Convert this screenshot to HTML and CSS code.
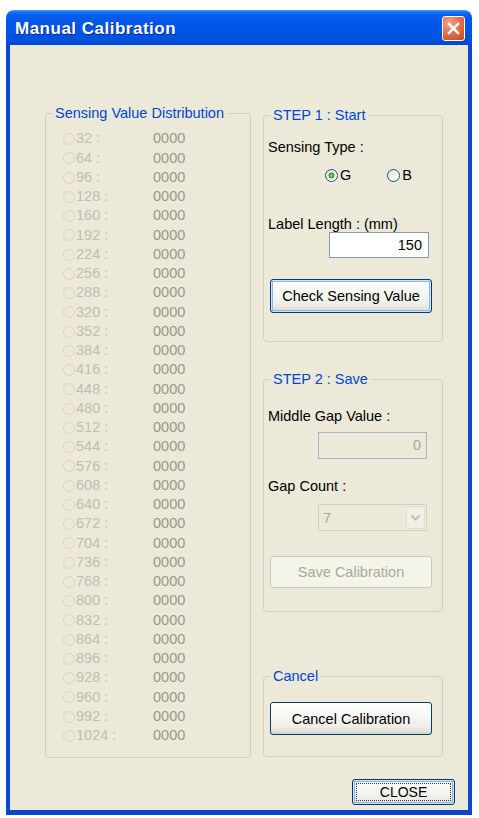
FILE: index.html
```html
<!DOCTYPE html>
<html>
<head>
<meta charset="utf-8">
<title>Manual Calibration</title>
<link rel="stylesheet" href="styles.css">
</head>
<body>
<div class="window">
  <div class="titlebar">
    <span class="title">Manual Calibration</span>
    <span class="close-x">
      <svg width="23" height="25" viewBox="0 0 23 25"><path d="M6.5 7.5 L16.5 17.5 M16.5 7.5 L6.5 17.5" stroke="#fff" stroke-width="2.6" stroke-linecap="square" fill="none"/></svg>
    </span>
  </div>
  <div class="client">
    <div class="columns">
      <fieldset class="group dist">
        <legend>Sensing Value Distribution</legend>
        <div class="row"><span class="rd"></span><span class="lbl">32 :</span><span class="val">0000</span></div>
        <div class="row"><span class="rd"></span><span class="lbl">64 :</span><span class="val">0000</span></div>
        <div class="row"><span class="rd"></span><span class="lbl">96 :</span><span class="val">0000</span></div>
        <div class="row"><span class="rd"></span><span class="lbl">128 :</span><span class="val">0000</span></div>
        <div class="row"><span class="rd"></span><span class="lbl">160 :</span><span class="val">0000</span></div>
        <div class="row"><span class="rd"></span><span class="lbl">192 :</span><span class="val">0000</span></div>
        <div class="row"><span class="rd"></span><span class="lbl">224 :</span><span class="val">0000</span></div>
        <div class="row"><span class="rd"></span><span class="lbl">256 :</span><span class="val">0000</span></div>
        <div class="row"><span class="rd"></span><span class="lbl">288 :</span><span class="val">0000</span></div>
        <div class="row"><span class="rd"></span><span class="lbl">320 :</span><span class="val">0000</span></div>
        <div class="row"><span class="rd"></span><span class="lbl">352 :</span><span class="val">0000</span></div>
        <div class="row"><span class="rd"></span><span class="lbl">384 :</span><span class="val">0000</span></div>
        <div class="row"><span class="rd"></span><span class="lbl">416 :</span><span class="val">0000</span></div>
        <div class="row"><span class="rd"></span><span class="lbl">448 :</span><span class="val">0000</span></div>
        <div class="row"><span class="rd"></span><span class="lbl">480 :</span><span class="val">0000</span></div>
        <div class="row"><span class="rd"></span><span class="lbl">512 :</span><span class="val">0000</span></div>
        <div class="row"><span class="rd"></span><span class="lbl">544 :</span><span class="val">0000</span></div>
        <div class="row"><span class="rd"></span><span class="lbl">576 :</span><span class="val">0000</span></div>
        <div class="row"><span class="rd"></span><span class="lbl">608 :</span><span class="val">0000</span></div>
        <div class="row"><span class="rd"></span><span class="lbl">640 :</span><span class="val">0000</span></div>
        <div class="row"><span class="rd"></span><span class="lbl">672 :</span><span class="val">0000</span></div>
        <div class="row"><span class="rd"></span><span class="lbl">704 :</span><span class="val">0000</span></div>
        <div class="row"><span class="rd"></span><span class="lbl">736 :</span><span class="val">0000</span></div>
        <div class="row"><span class="rd"></span><span class="lbl">768 :</span><span class="val">0000</span></div>
        <div class="row"><span class="rd"></span><span class="lbl">800 :</span><span class="val">0000</span></div>
        <div class="row"><span class="rd"></span><span class="lbl">832 :</span><span class="val">0000</span></div>
        <div class="row"><span class="rd"></span><span class="lbl">864 :</span><span class="val">0000</span></div>
        <div class="row"><span class="rd"></span><span class="lbl">896 :</span><span class="val">0000</span></div>
        <div class="row"><span class="rd"></span><span class="lbl">928 :</span><span class="val">0000</span></div>
        <div class="row"><span class="rd"></span><span class="lbl">960 :</span><span class="val">0000</span></div>
        <div class="row"><span class="rd"></span><span class="lbl">992 :</span><span class="val">0000</span></div>
        <div class="row"><span class="rd"></span><span class="lbl">1024 :</span><span class="val">0000</span></div>
      </fieldset>

      <div class="right">
        <fieldset class="group step1">
          <legend>STEP 1 : Start</legend>
          <div class="text">Sensing Type :</div>
          <div class="radio-row">
            <span class="opt"><span class="rb checked"></span><span>G</span></span>
            <span class="opt opt-b"><span class="rb"></span><span>B</span></span>
          </div>
          <div class="text label-len">Label Length : (mm)</div>
          <div class="edit">150</div>
          <div class="btn focused check">Check Sensing Value</div>
        </fieldset>

        <fieldset class="group step2">
          <legend>STEP 2 : Save</legend>
          <div class="text">Middle Gap Value :</div>
          <div class="edit disabled gapval">0</div>
          <div class="text gapcount">Gap Count :</div>
          <div class="combo">
            <span class="combo-text">7</span>
            <span class="combo-btn">
              <svg width="17" height="21" viewBox="0 0 17 21"><path d="M4.5 8.5 L8.5 12.5 L12.5 8.5" stroke="#C2C0B3" stroke-width="2" fill="none"/></svg>
            </span>
          </div>
          <div class="btn disabled save">Save Calibration</div>
        </fieldset>

        <fieldset class="group cancel">
          <legend>Cancel</legend>
          <div class="btn cancel-btn">Cancel Calibration</div>
        </fieldset>
      </div>
    </div>
    <div class="footer">
      <div class="btn focused close-btn"><span class="focus-rect">CLOSE</span></div>
    </div>
  </div>
</div>
</body>
</html>
```

FILE: styles.css
```css
html, body {
  margin: 0;
  padding: 0;
  background: #ffffff;
}

body {
  font-family: "Liberation Sans", Arial, sans-serif;
  font-size: 14.5px;
}

.window {
  width: 466px;
  margin: 10px 0 0 6px;
}

.titlebar {
  height: 35px;
  box-sizing: border-box;
  border-radius: 8px 8px 0 0;
  background: linear-gradient(to bottom, #4a9bff 0px, #1a6ff5 2px, #0a5deb 5px, #0057e8 12px, #0054e3 24px, #0050dc 31px, #0047d2 35px);
  display: flex;
  align-items: center;
  justify-content: space-between;
  padding: 0 7px 0 9px;
}

.title {
  color: #ffffff;
  font-weight: bold;
  font-size: 17px;
  letter-spacing: 0.5px;
  text-shadow: 1px 1px 0 #0c2a8e;
  padding-top: 2px;
}

.close-x {
  width: 23px;
  height: 25px;
  box-sizing: border-box;
  border: 1px solid #ffffff;
  border-radius: 3px;
  background: radial-gradient(circle at 30% 25%, #f2a184 0, #e2744f 45%, #cf4d26 90%);
  display: flex;
  align-items: center;
  justify-content: center;
  margin-top: 1px;
}

.close-x svg {
  display: block;
}

.client {
  background: #ece9d8;
  border-left: 4px solid #0b47d6;
  border-right: 4px solid #0b47d6;
  border-bottom: 5px solid #0b44d2;
  padding: 0 0 5px 0;
}

.columns {
  display: flex;
  align-items: flex-start;
  padding-left: 35px;
  gap: 12px;
}

.group {
  margin: 0;
  border: 1px solid #d0d0bf;
  border-radius: 4px;
  padding: 0;
  box-sizing: border-box;
  min-width: 0;
}

.group legend {
  color: #0046d5;
  line-height: 16px;
  padding: 0 3px 0 2px;
  margin-left: 7px;
}

.dist {
  width: 206px;
  margin-top: 60px;
  padding: 8.4px 0 11.6px 0;
}

.dist legend {
  margin-left: 7px;
}

.row {
  display: grid;
  grid-template-columns: 12px 78px auto;
  align-items: center;
  height: 19.25px;
  line-height: 19.25px;
  margin-left: 17px;
}

.rd {
  width: 12px;
  height: 12px;
  box-sizing: border-box;
  border: 1px solid #d8d5c8;
  border-radius: 50%;
}

.lbl {
  color: #c0bdb0;
  padding-left: 1px;
  white-space: nowrap;
}

.val {
  color: #9a978a;
}

.right {
  width: 180px;
  margin-top: 62px;
  display: flex;
  flex-direction: column;
}

.text {
  line-height: 16px;
  margin-left: 4px;
  color: #000000;
}

.step1 {
  padding: 16px 0 28px;
}

.radio-row {
  display: flex;
  align-items: center;
  height: 16px;
  margin: 12px 0 0 61px;
}

.opt {
  display: flex;
  align-items: center;
  gap: 2px;
}

.opt-b {
  margin-left: 36px;
}

.rb {
  width: 13px;
  height: 13px;
  box-sizing: border-box;
  border: 1px solid #1c5180;
  border-radius: 50%;
  background: linear-gradient(135deg, #dcdbd3 0%, #f6f6f2 60%, #ffffff 100%);
}

.rb.checked {
  background: radial-gradient(circle at center, #8edb7e 0, #45ad3c 1.8px, #2f9a2a 2.7px, rgba(47,154,42,0) 3.3px), linear-gradient(135deg, #dcdbd3 0%, #f6f6f2 60%, #ffffff 100%);
}

.label-len {
  margin-top: 33px;
}

.edit {
  margin-left: 65px;
  width: 100px;
  height: 26px;
  box-sizing: border-box;
  border: 1px solid #7f9db9;
  background: #ffffff;
  text-align: right;
  line-height: 24px;
  padding-right: 6px;
  color: #000000;
}

.edit.disabled {
  background: #ece9d8;
  border-color: #a8b3c0;
  color: #aca899;
}

.btn {
  box-sizing: border-box;
  border: 1px solid #003c74;
  border-radius: 3px;
  background: linear-gradient(to bottom, #ffffff 0%, #f7f7f4 40%, #efeee8 75%, #e3e1d8 92%, #d6d0c5 100%);
  display: flex;
  align-items: center;
  justify-content: center;
  color: #000000;
  white-space: nowrap;
}

.btn.focused {
  box-shadow: inset 0 0 0 1px #cee3fb, inset 0 0 0 2px #8fb2e8;
}

.btn.disabled {
  border-color: #c9c7ba;
  background: #f5f4ea;
  color: #aca899;
  box-shadow: none;
}

.check {
  margin: 21px 0 0 6px;
  width: 162px;
  height: 34px;
}

.step2 {
  margin-top: 29px;
  padding: 21px 0 23px;
}

.gapval {
  margin: 8px 0 0 54px;
  width: 109px;
  height: 27px;
  line-height: 25px;
  padding-right: 5px;
}

.gapcount {
  margin-top: 19px;
}

.combo {
  margin: 10px 0 0 54px;
  width: 109px;
  height: 27px;
  box-sizing: border-box;
  border: 1px solid #d3d0c4;
  background: #ece9d8;
  display: flex;
  align-items: center;
  justify-content: space-between;
  padding: 1px;
}

.combo-text {
  color: #aca899;
  padding-left: 3px;
}

.combo-btn {
  width: 19px;
  height: 23px;
  box-sizing: border-box;
  border: 1px solid #e0ded3;
  border-radius: 2px;
  background: #f1efe6;
  display: flex;
  align-items: center;
  justify-content: center;
}

.combo-btn svg {
  display: block;
}

.save {
  margin: 25px 0 0 6px;
  width: 162px;
  height: 32px;
}

.cancel {
  margin-top: 56px;
  padding: 18px 0 21px;
}

.cancel-btn {
  margin-left: 6px;
  width: 162px;
  height: 33px;
}

.footer {
  display: flex;
  justify-content: flex-end;
  padding-right: 13px;
  margin-top: 21px;
}

.close-btn {
  width: 103px;
  height: 26px;
  padding: 3px;
}

.focus-rect {
  flex: 1;
  align-self: stretch;
  box-sizing: border-box;
  border: 1px dotted #3a3a3a;
  display: flex;
  align-items: center;
  justify-content: center;
  font-size: 14px;
}
```
